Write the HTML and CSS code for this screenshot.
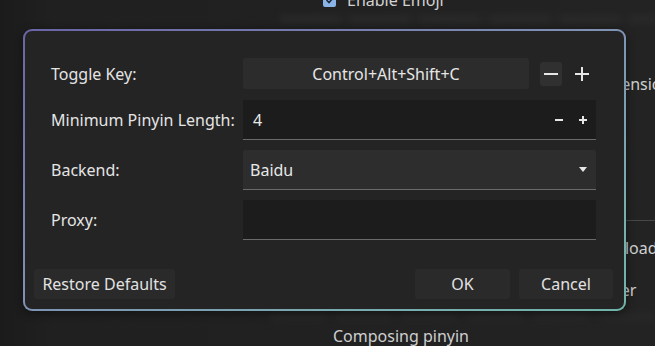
FILE: index.html
```html
<!DOCTYPE html>
<html>
<head>
<meta charset="utf-8">
<link rel="stylesheet" href="styles.css">
</head>
<body>
<div class="backdrop">
  <div class="bg-top">
    <span class="bg-check"><svg width="12" height="12" viewBox="0 0 12 12"><path d="M2.5 6 L5 8.5 L9.5 3.5" fill="none" stroke="#1e2a3a" stroke-width="1.6"/></svg></span>
    <span class="bg-text">Enable Emoji</span>
  </div>
  <div class="bg-haze bg-haze-top"></div>
  <div class="bg-right">
    <div class="bg-r bg-r1">Extensions</div>
    <div class="bg-rule"></div>
    <div class="bg-r bg-r2">Preload</div>
    <div class="bg-r bg-r3">Reorder</div>
  </div>
  <div class="bg-haze bg-haze-bottom"></div>
  <div class="bg-bottom">Composing pinyin</div>
</div>

<div class="dialog">
  <div class="form">
    <div class="label">Toggle Key:</div>
    <div class="keyrow">
      <div class="keybtn">Control+Alt+Shift+C</div>
      <div class="iconbtn minus-btn"><svg width="14" height="14" viewBox="0 0 14 14"><path d="M0 7 H14" stroke="#e6e6e6" stroke-width="2"/></svg></div>
      <div class="iconbtn plus-btn"><svg width="14" height="14" viewBox="0 0 14 14"><path d="M0 7 H14 M7 0 V14" stroke="#e6e6e6" stroke-width="2"/></svg></div>
    </div>

    <div class="label">Minimum Pinyin Length:</div>
    <div class="field spin">
      <span class="value">4</span>
      <span class="spin-ctl">
        <svg width="8" height="8" viewBox="0 0 8 8"><path d="M0 4 H8" stroke="#e6e6e6" stroke-width="2"/></svg>
        <svg width="8" height="8" viewBox="0 0 8 8"><path d="M0 4 H8 M4 0 V8" stroke="#e6e6e6" stroke-width="2"/></svg>
      </span>
    </div>

    <div class="label">Backend:</div>
    <div class="field combo">
      <span class="value">Baidu</span>
      <svg class="arrow" width="8" height="5" viewBox="0 0 8 5"><path d="M0 0 H8 L4 5 Z" fill="#e6e6e6"/></svg>
    </div>

    <div class="label">Proxy:</div>
    <div class="field proxy"></div>
  </div>

  <div class="footer">
    <div class="btn restore">Restore Defaults</div>
    <div class="footer-right">
      <div class="btn ok">OK</div>
      <div class="btn cancel">Cancel</div>
    </div>
  </div>
</div>
</body>
</html>
```

FILE: styles.css
```css
html, body {
  margin: 0;
  padding: 0;
  width: 655px;
  height: 346px;
  overflow: hidden;
  background: #1e1e1e;
  font-family: "Noto Sans", "DejaVu Sans", sans-serif;
  font-size: 16px;
  color: #e2e2e2;
}

.backdrop {
  position: relative;
  width: 655px;
  height: 346px;
  overflow: hidden;
  background: linear-gradient(90deg, #1b1b1b 0, #202020 8%, #212121 50%, #232323 100%);
}

.bg-top {
  display: flex;
  align-items: center;
  gap: 11px;
  margin-top: -12px;
  padding-left: 323px;
  height: 24px;
  color: #d2d2d2;
}

.bg-check {
  width: 13px;
  height: 13px;
  border-radius: 2px;
  background: #8ab4e8;
  display: flex;
  align-items: center;
  justify-content: center;
}

.bg-text {
  font-size: 16px;
}

.bg-haze {
  height: 10px;
  filter: blur(3px);
  opacity: 0.5;
}

.bg-haze-top {
  margin: 2px 0 0 280px;
  width: 375px;
  background: repeating-linear-gradient(90deg, #2e2e2e 0 60px, #262626 60px 70px);
}

.bg-right {
  margin-left: 598px;
  padding-top: 48px;
  color: #d0d0d0;
  white-space: nowrap;
}

.bg-r1 {
  height: 24px;
  line-height: 24px;
}

.bg-rule {
  margin-top: 124px;
  margin-left: 27px;
  height: 1px;
  background: #474747;
}

.bg-r2 {
  margin-top: 15px;
  margin-left: 2px;
  height: 24px;
  line-height: 24px;
}

.bg-r3 {
  margin-top: 18px;
  margin-left: -22px;
  height: 24px;
  line-height: 24px;
}

.bg-haze-bottom {
  margin: 10px 0 0 270px;
  width: 385px;
  background: repeating-linear-gradient(90deg, #2b2b2b 0 55px, #242424 55px 66px);
}

.bg-bottom {
  margin-top: 2px;
  padding-left: 333px;
  color: #cfcfcf;
  line-height: 24px;
}

.dialog {
  position: absolute;
  left: 23px;
  top: 29px;
  width: 603px;
  height: 282px;
  box-sizing: border-box;
  border: 2px solid transparent;
  border-radius: 9px;
  background:
    linear-gradient(#242424, #242424) padding-box,
    linear-gradient(to bottom right, #6a64a6 0%, #7f8fb4 45%, #78aeb0 80%, #70b4aa 100%) border-box;
  box-shadow: 0 2px 10px rgba(0, 0, 0, 0.45);
  display: flex;
  flex-direction: column;
}

.form {
  display: grid;
  grid-template-columns: 192px 1fr;
  grid-template-rows: 32px 40px 40px 40px;
  row-gap: 10px;
  padding: 27px 28px 0 26px;
  align-items: stretch;
}

.label {
  display: flex;
  align-items: center;
  white-space: nowrap;
  color: #e4e4e4;
}

.keyrow {
  display: flex;
  align-items: center;
}

.keybtn {
  flex: 1;
  height: 31px;
  margin-top: -1px;
  background: #2c2c2c;
  border-radius: 3px;
  display: flex;
  align-items: center;
  justify-content: center;
  color: #e6e6e6;
}

.iconbtn {
  width: 22px;
  height: 24px;
  border-radius: 3px;
  display: flex;
  align-items: center;
  justify-content: center;
}

.minus-btn {
  margin-left: 11px;
  background: #303030;
}

.plus-btn {
  margin-left: 9px;
  margin-right: 3px;
}

.field {
  box-sizing: border-box;
  border-bottom: 1px solid #6a6a6a;
  display: flex;
  align-items: center;
}

.spin, .proxy {
  background: #1c1c1c;
}

.spin {
  padding: 0 9px 0 10px;
  justify-content: space-between;
}

.spin-ctl {
  display: flex;
  gap: 16px;
  align-items: center;
}

.combo {
  background: #2d2d2d;
  padding: 0 9px 0 7px;
  justify-content: space-between;
  border-radius: 2px 2px 0 0;
}

.value {
  color: #e8e8e8;
}

.footer {
  margin-top: auto;
  display: flex;
  justify-content: space-between;
  padding: 0 11px 10px 9px;
}

.footer-right {
  display: flex;
  gap: 9px;
}

.btn {
  height: 30px;
  box-sizing: border-box;
  background: #2a2a2a;
  border-radius: 3px;
  display: flex;
  align-items: center;
  justify-content: center;
  color: #e2e2e2;
  white-space: nowrap;
}

.restore {
  width: 141px;
}

.ok {
  width: 95px;
}

.cancel {
  width: 94px;
}
```
